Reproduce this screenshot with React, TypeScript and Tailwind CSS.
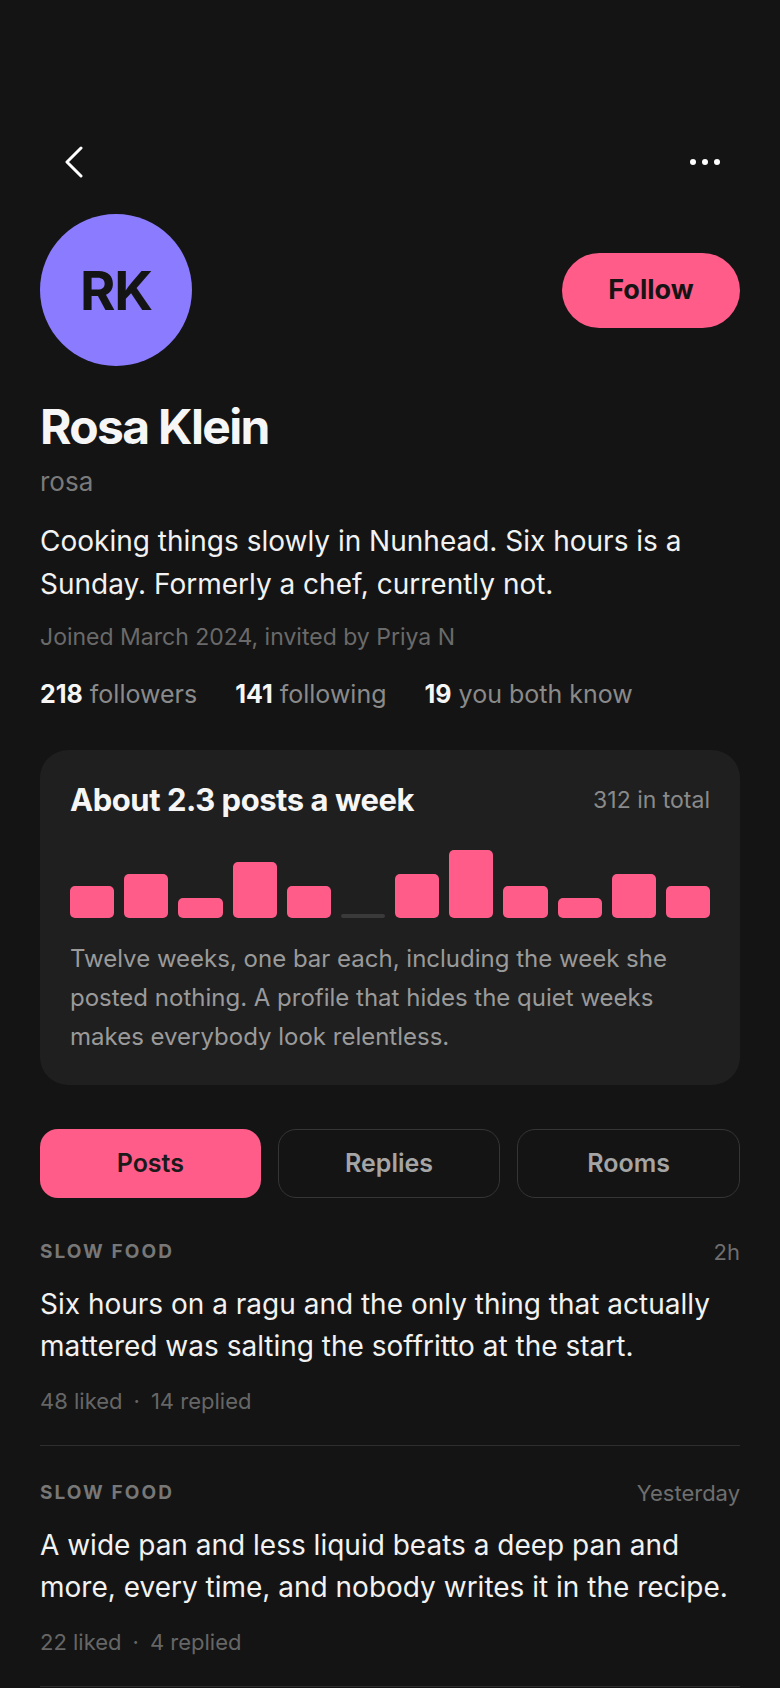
import React from "react";

const bars = [32, 44, 20, 56, 32, 0, 44, 68, 32, 20, 44, 32];

const posts = [
  {
    room: "SLOW FOOD",
    time: "2h",
    text: "Six hours on a ragu and the only thing that actually mattered was salting the soffritto at the start.",
    liked: 48,
    replied: 14,
  },
  {
    room: "SLOW FOOD",
    time: "Yesterday",
    text: "A wide pan and less liquid beats a deep pan and more, every time, and nobody writes it in the recipe.",
    liked: 22,
    replied: 4,
  },
];

export default function App() {
  return (
    <div className="min-h-[1688px] bg-[#141414] px-[40px] pt-[130px] font-['Inter',sans-serif] text-[#f4f4f4]">
      <header className="flex h-16 items-center justify-between">
        <button className="ml-[24px] flex items-center">
          <svg width="20" height="32" viewBox="0 0 20 32" fill="none">
            <polyline
              points="17,2 3,16 17,30"
              stroke="#ffffff"
              strokeWidth="3"
              strokeLinecap="round"
              strokeLinejoin="round"
            />
          </svg>
        </button>
        <div className="mr-[20px] flex gap-[6px]">
          <span className="h-[6px] w-[6px] rounded-full bg-white" />
          <span className="h-[6px] w-[6px] rounded-full bg-white" />
          <span className="h-[6px] w-[6px] rounded-full bg-white" />
        </div>
      </header>

      <div className="mt-[20px] flex items-center justify-between">
        <div className="flex h-[152px] w-[152px] items-center justify-center rounded-full bg-[#8b7cff] text-[54px] font-bold tracking-[-0.02em] text-[#141414]">
          RK
        </div>
        <button className="flex h-[75px] w-[178px] items-center justify-center rounded-full bg-[#ff5c8a] text-[27px] font-bold text-[#141414]">
          Follow
        </button>
      </div>

      <h1 className="mt-[33px] text-[48px] font-bold leading-[55px] tracking-[-0.035em] text-[#f6f6f6]">
        Rosa Klein
      </h1>
      <div className="mt-[12px] text-[26px] leading-[32px] text-[#7a7a7a]">rosa</div>
      <p className="mt-[22px] text-[28px] leading-[43px] text-[#f2f2f2]">
        Cooking things slowly in Nunhead. Six hours is a Sunday. Formerly a chef, currently not.
      </p>
      <div className="mt-[16px] text-[23px] leading-[30px] text-[#6a6a6a]">
        Joined March 2024, invited by Priya N
      </div>
      <div className="mt-[26px] flex gap-[38px] text-[25px] leading-[32px]">
        <div>
          <span className="font-bold text-[#f6f6f6]">218</span>{" "}
          <span className="text-[#8a8a8a]">followers</span>
        </div>
        <div>
          <span className="font-bold text-[#f6f6f6]">141</span>{" "}
          <span className="text-[#8a8a8a]">following</span>
        </div>
        <div>
          <span className="font-bold text-[#f6f6f6]">19</span>{" "}
          <span className="text-[#8a8a8a]">you both know</span>
        </div>
      </div>

      <section className="mt-[40px] rounded-[28px] bg-[#1f1f1f] px-[30px] pb-[29px] pt-[31px]">
        <div className="flex h-[38px] items-center justify-between">
          <h2 className="text-[31px] font-bold tracking-[-0.015em] text-[#f6f6f6]">About 2.3 posts a week</h2>
          <span className="text-[23px] text-[#8a8a8a]">312 in total</span>
        </div>
        <div className="mt-[31px] flex h-[68px] items-end gap-[10px]">
          {bars.map((h, i) =>
            h === 0 ? (
              <div key={i} className="h-[4px] flex-1 rounded-full bg-[#3a3a3a]" />
            ) : (
              <div key={i} className="flex-1 rounded-[5px] bg-[#ff5c8a]" style={{ height: h }} />
            )
          )}
        </div>
        <p className="mt-[21px] text-[24px] leading-[39px] text-[#9a9a9a]">
          Twelve weeks, one bar each, including the week she posted nothing. A profile that hides the quiet weeks
          makes everybody look relentless.
        </p>
      </section>

      <div className="mt-[44px] flex h-[69px] gap-[17px]">
        <button className="flex flex-1 items-center justify-center rounded-[18px] bg-[#ff5c8a] text-[25px] font-semibold text-[#1a1a1a]">
          Posts
        </button>
        <button className="flex flex-1 items-center justify-center rounded-[18px] border-[1.5px] border-[#353535] text-[25px] font-semibold text-[#a5a5a5]">
          Replies
        </button>
        <button className="flex flex-1 items-center justify-center rounded-[18px] border-[1.5px] border-[#353535] text-[25px] font-semibold text-[#a5a5a5]">
          Rooms
        </button>
      </div>

      <div className="mt-[7px]">
        {posts.map((p, i) => (
          <article key={i} className="border-b border-[#2e2e2e] pb-[30px] pt-[35px]">
            <div className="flex h-[24px] items-center justify-between">
              <span className="text-[19px] font-bold tracking-[0.11em] text-[#777777]">{p.room}</span>
              <span className="text-[22px] text-[#6e6e6e]">{p.time}</span>
            </div>
            <p className="mt-[19px] text-[28px] leading-[42px] text-[#f2f2f2]">{p.text}</p>
            <div className="mt-[20px] flex items-center text-[22px] leading-[28px] text-[#666666]">
              <span>{p.liked} liked</span>
              <span className="mx-[11px]">·</span>
              <span>{p.replied} replied</span>
            </div>
          </article>
        ))}
      </div>
    </div>
  );
}
